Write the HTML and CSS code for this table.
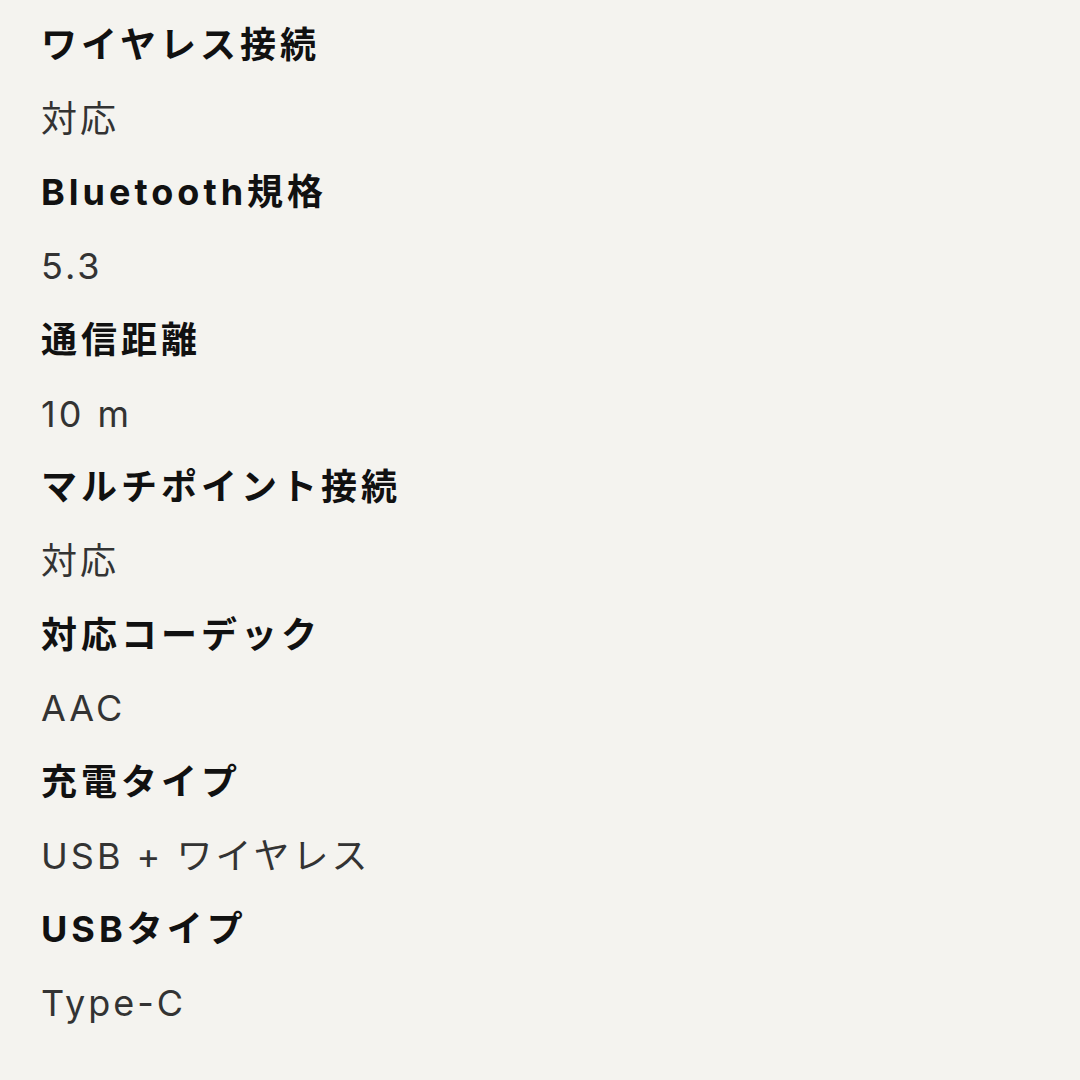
FILE: index.html
```html
<!DOCTYPE html>
<html lang="ja">
<head>
<meta charset="utf-8">
<link rel="stylesheet" href="styles.css">
</head>
<body>
<dl class="specs">
  <dt class="label">ワイヤレス接続</dt>
  <dd class="value">対応</dd>
  <dt class="label">Bluetooth規格</dt>
  <dd class="value">5.3</dd>
  <dt class="label">通信距離</dt>
  <dd class="value">10 m</dd>
  <dt class="label">マルチポイント接続</dt>
  <dd class="value">対応</dd>
  <dt class="label">対応コーデック</dt>
  <dd class="value">AAC</dd>
  <dt class="label">充電タイプ</dt>
  <dd class="value">USB + ワイヤレス</dd>
  <dt class="label">USBタイプ</dt>
  <dd class="value">Type-C</dd>
</dl>
</body>
</html>
```

FILE: styles.css
```css
html, body {
  margin: 0;
  padding: 0;
  background: #f4f3ef;
}
.specs {
  margin: 0;
  padding: 9px 41px 0;
  font-family: "Inter", "Noto Sans CJK JP", sans-serif;
  font-size: 36px;
  line-height: 73.7px;
}
.label {
  margin: 0;
  font-weight: 700;
  color: #111;
  letter-spacing: 4px;
}
.value {
  margin: 0;
  font-weight: 400;
  color: #333;
  letter-spacing: 3px;
}
```
